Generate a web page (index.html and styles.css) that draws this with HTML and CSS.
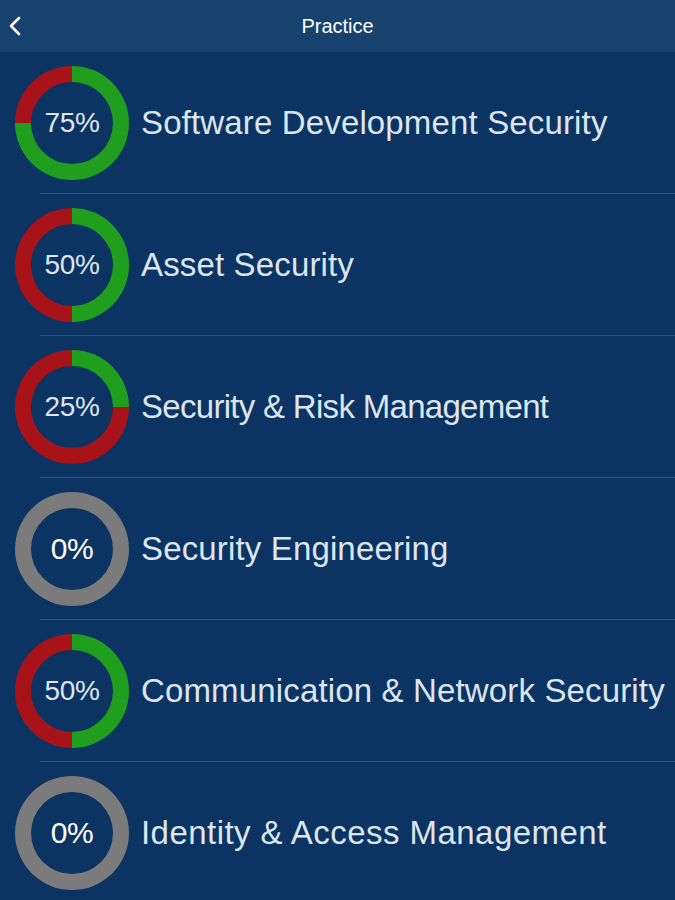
FILE: index.html
```html
<!DOCTYPE html>
<html>
<head>
<meta charset="utf-8">
<link rel="stylesheet" href="styles.css">
</head>
<body>
<header class="bar">
  <svg class="back" width="14" height="22" viewBox="0 0 14 22"><polyline points="11,3 3,11 11,19" fill="none" stroke="#fff" stroke-width="2.6" stroke-linecap="round" stroke-linejoin="round"/></svg>
  <h1 class="title">Practice</h1>
</header>
<ul class="list">
  <li class="row"><div class="ring" style="--p:75"><span class="pct">75%</span></div><span class="name">Software Development Security</span></li>
  <li class="row"><div class="ring" style="--p:50"><span class="pct">50%</span></div><span class="name">Asset Security</span></li>
  <li class="row"><div class="ring" style="--p:25"><span class="pct">25%</span></div><span class="name tight">Security &amp; Risk Management</span></li>
  <li class="row"><div class="ring zero"><span class="pct bold">0%</span></div><span class="name">Security Engineering</span></li>
  <li class="row"><div class="ring" style="--p:50"><span class="pct">50%</span></div><span class="name">Communication &amp; Network Security</span></li>
  <li class="row"><div class="ring zero"><span class="pct bold">0%</span></div><span class="name wide">Identity &amp; Access Management</span></li>
</ul>
</body>
</html>
```
FILE: styles.css
```css
html, body {
  margin: 0;
  padding: 0;
  height: 900px;
  overflow: hidden;
  background: #0b3463;
  font-family: "Liberation Sans", Arial, sans-serif;
  color: #e6ecf4;
}
.bar {
  height: 52px;
  background: #18426e;
  display: flex;
  align-items: center;
  justify-content: center;
  position: relative;
}
.back {
  position: absolute;
  left: 8px;
  top: 15px;
}
.title {
  margin: 0;
  font-weight: 400;
  font-size: 20px;
  color: #fff;
}
.list {
  list-style: none;
  margin: 0;
  padding: 0;
}
.row {
  height: 142px;
  display: flex;
  align-items: center;
  gap: 12px;
  padding-left: 15px;
  position: relative;
}
.row::after {
  content: "";
  position: absolute;
  left: 40px;
  right: 0;
  bottom: 0;
  height: 1px;
  background: #2b5787;
}
.ring {
  width: 114px;
  height: 114px;
  border-radius: 50%;
  flex: none;
  position: relative;
  display: flex;
  align-items: center;
  justify-content: center;
  background: conic-gradient(#1f9f1d calc(var(--p) * 1%), #a81219 0);
}
.ring.zero {
  background: #7b7b7b;
}
.ring::before {
  content: "";
  position: absolute;
  inset: 16px;
  border-radius: 50%;
  background: #0b3463;
}
.pct {
  position: relative;
  font-size: 28px;
  letter-spacing: -0.4px;
  color: #dfe6ef;
}
.pct.bold {
  font-size: 30px;
  color: #fff;
}
.name {
  font-size: 33px;
  letter-spacing: 0.15px;
  white-space: nowrap;
  color: #dde5ef;
}
.name.tight {
  letter-spacing: -0.7px;
}
.name.wide {
  letter-spacing: 0.45px;
}
```
